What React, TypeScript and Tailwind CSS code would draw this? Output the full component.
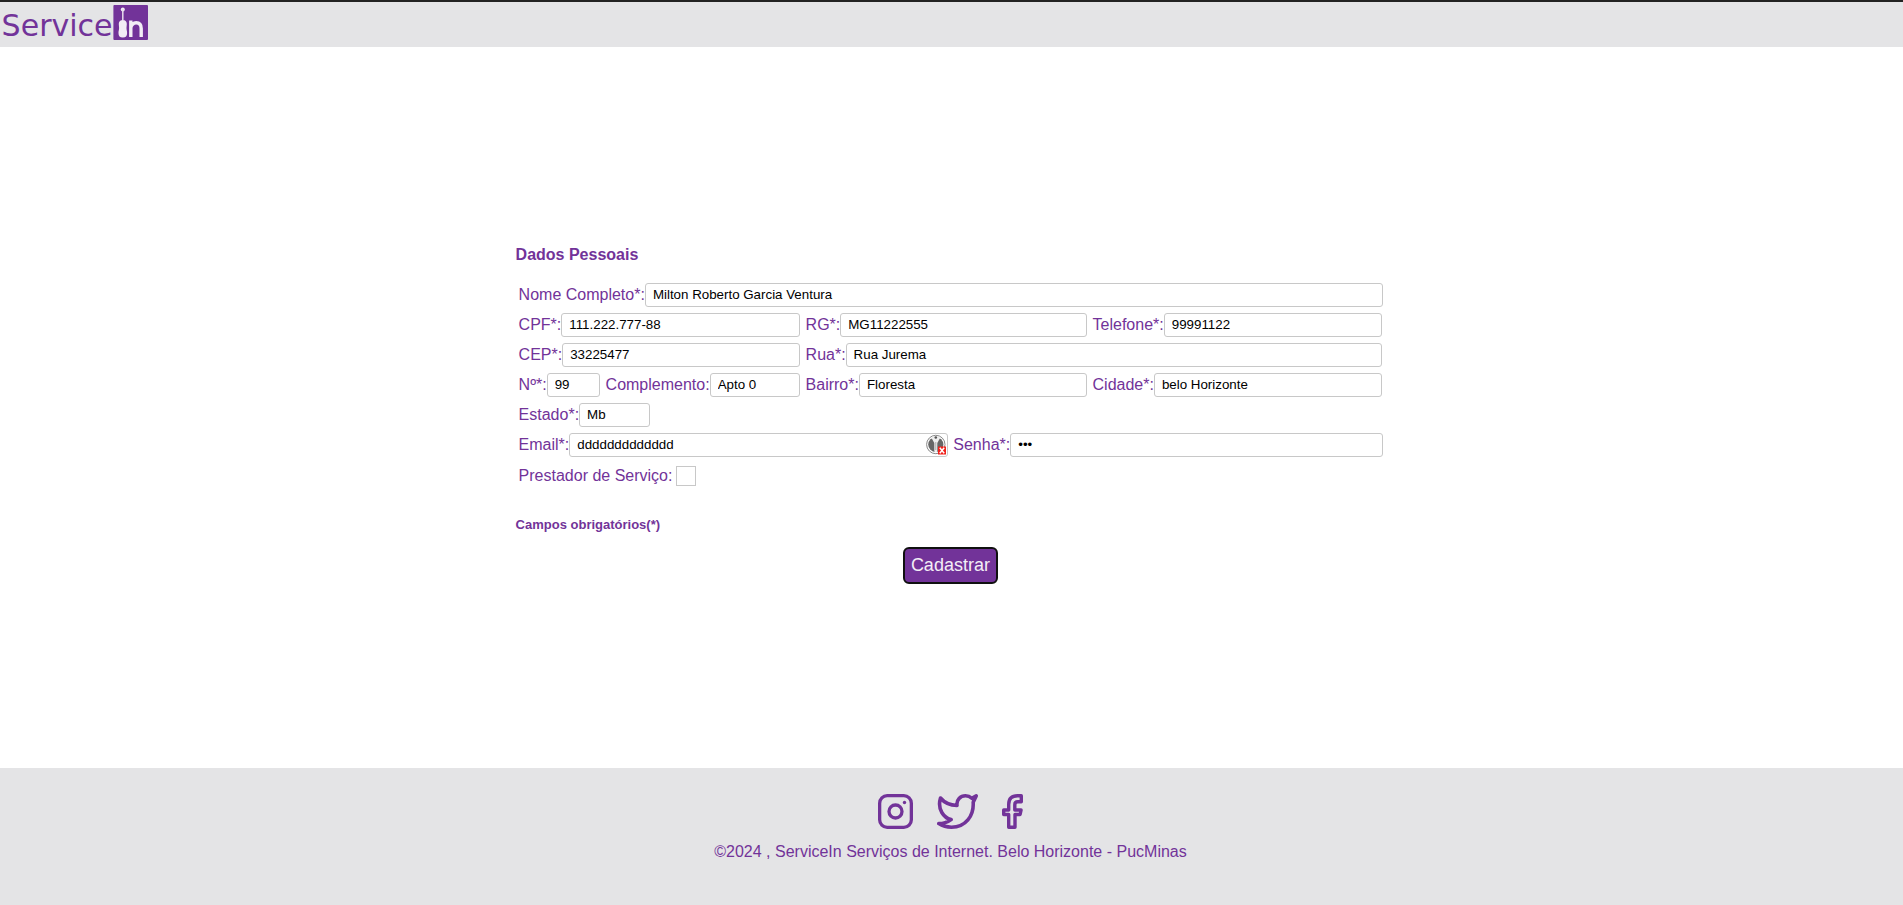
import type { ReactNode } from "react";

type FieldProps = {
  label: string;
  value: string;
  className: string;
  type?: string;
  children?: ReactNode;
};

function Field({ label, value, className, type = "text", children }: FieldProps) {
  return (
    <label className={`relative flex h-6 shrink-0 items-center ${className}`}>
      <span className="whitespace-nowrap leading-6">{label}</span>
      <input
        type={type}
        defaultValue={value}
        className="h-6 min-w-0 flex-1 rounded-[3px] border border-[#c8c8c8] bg-white px-[7px] pb-[2px] text-[13.333px] text-black outline-none"
      />
      {children}
    </label>
  );
}

function Logo() {
  return (
    <svg width="150" height="45" viewBox="0 0 150 45" className="block overflow-visible" role="img">
      <text x="1.6" y="34.4" fontSize="29.5" textLength="111" lengthAdjust="spacingAndGlyphs" fill="#723399" fontFamily="Verdana, DejaVu Sans">
        Service
      </text>
      <rect x="113.4" y="3" width="34.6" height="35" rx="1" fill="#723399" />
      <circle cx="122.8" cy="7.6" r="2" fill="#f2edf5" />
      <path d="M122.8 7v14" stroke="#e6dcec" strokeWidth="1.5" />
      <path d="M121 18.300h3.600c1.500.8 2.200 2 2.200 3.700 0 1.500-.3 2.500-.3 4 0 1.700.6 3 .6 5 0 3.200-1.200 4.500-4.300 4.500s-4.300-1.300-4.300-4.500c0-2 .6-3.300.6-5 0-1.500-.3-2.500-.3-4 0-1.700.7-2.900 2.200-3.700z" fill="#f2edf5" />
      <path d="M130.800 35V18.600M130.800 25.500c.8-3.300 2.800-4.800 5.400-4.800 3.700 0 5 2.200 5 5.800V35" fill="none" stroke="#f2edf5" strokeWidth="3.4" />
    </svg>
  );
}

function ManagerIcon() {
  return (
    <svg width="20" height="21" viewBox="0 0 20 21" className="absolute right-[2px] top-px">
      <circle cx="9.8" cy="10.5" r="9.2" fill="#fff" stroke="#888" strokeWidth="1" />
      <circle cx="9.8" cy="10.5" r="7.6" fill="#666" />
      <path d="M3.800 4.500 9.800 1.800l6 2.700-2 0-2.500 4.500v8.500l-1.500 1-1.500-1V9L5.800 4.500z" fill="#eee" />
      <path d="M9.800 8v8" stroke="#aaa" />
      <circle cx="9.8" cy="3.5" r="1.3" fill="#555" />
      <rect x="12" y="12.5" width="8" height="8" fill="#f0201a" />
      <path d="m13.800 13.800 4.400 5.400m0-5.400-4.400 5.400" stroke="#fff" strokeWidth="1.5" />
    </svg>
  );
}

export default function App() {
  return (
    <div className="flex h-[905px] flex-col bg-white font-['Liberation_Sans',sans-serif] text-base text-[#723399]">
      <header className="h-[47px] border-t-2 border-[#222222] bg-[#e4e4e6]">
        <Logo />
      </header>

      <main className="flex-1 pl-[515.6px] pt-[196px]">
        <form className="w-[869.6px]" onSubmit={(e) => e.preventDefault()}>
          <h1 className="h-10 text-base font-bold leading-6">Dados Pessoais</h1>
          <div className="flex flex-col gap-1.5 pl-[3px]">
            <div className="flex">
              <Field label="Nome Completo*:" value="Milton Roberto Garcia Ventura" className="w-[864.8px]" />
            </div>
            <div className="flex gap-[5.2px]">
              <Field label="CPF*:" value="111.222.777-88" className="w-[281.8px]" />
              <Field label="RG*:" value="MG11222555" className="w-[281.8px]" />
              <Field label="Telefone*:" value="99991122" className="w-[289.8px]" />
            </div>
            <div className="flex gap-[5.2px]">
              <Field label="CEP*:" value="33225477" className="w-[281.8px]" />
              <Field label="Rua*:" value="Rua Jurema" className="w-[576.8px]" />
            </div>
            <div className="flex gap-[5.2px]">
              <Field label="Nº*:" value="99" className="w-[81.8px]" />
              <Field label="Complemento:" value="Apto 0" className="w-[194.8px]" />
              <Field label="Bairro*:" value="Floresta" className="w-[281.8px]" />
              <Field label="Cidade*:" value="belo Horizonte" className="w-[289.8px]" />
            </div>
            <div className="flex">
              <Field label="Estado*:" value="Mb" className="w-[131.8px]" />
            </div>
            <div className="flex gap-[4.9px]">
              <Field label="Email*:" value="ddddddddddddd" className="w-[429.8px]">
                <ManagerIcon />
              </Field>
              <Field label="Senha*:" value="123" type="password" className="w-[429.8px]" />
            </div>
            <label className="mt-[3px] flex h-5 items-center gap-1">
              <span className="whitespace-nowrap leading-5">Prestador de Serviço:</span>
              <input type="checkbox" className="size-5 appearance-none border border-[#c8c8c8] bg-white" />
            </label>
          </div>
          <p className="mt-[29px] text-[13px] font-bold leading-5">Campos obrigatórios(*)</p>
          <div className="mt-3 flex justify-center">
            <button className="h-[37px] w-[95px] rounded-[6px] border-2 border-[#101010] bg-[#723399] pb-[2px] text-lg leading-none text-[#f3eef6]">
              Cadastrar
            </button>
          </div>
        </form>
      </main>

      <footer className="flex h-[137px] flex-col items-center bg-[#e4e4e6] pr-[2px] pt-[26px]">
        <div className="flex h-[35px] items-start gap-6">
          <svg width="35" height="35" viewBox="0 0 35 35" fill="none" stroke="#723399" strokeWidth="3.3">
            <rect x="1.65" y="1.65" width="31.7" height="31.7" rx="7.5" />
            <circle cx="17.5" cy="17.5" r="6.5" />
            <circle cx="26.5" cy="8.5" r="1.7" fill="#723399" stroke="none" />
          </svg>
          <svg width="41" height="35" viewBox="0 0 41 35" fill="none" stroke="#723399" strokeWidth="3.6" strokeLinejoin="round" strokeLinecap="round">
            <path d="M3.500 4C7.500 8.800 13 11.300 20 11.500C19.200 5.500 23.500 1.800 28.500 1.800c2.500 0 4.500.8 6.300 2.500L39.200 1.900l-3 6.300C37 22 28.500 33.200 14.500 33.200c-4.800 0-9-1.200-12.700-3.600 4.800 0 8.300-1.200 12.300-4C7 24 0 15.500 3.500 4z" />
          </svg>
          <svg width="21" height="35" viewBox="0 0 21 35" fill="none" stroke="#723399" strokeWidth="3.4" strokeLinejoin="round">
            <path d="M6.700 33.300V20.500H1.700v-4.500h5V10.500c0-6 3.300-8.800 8.800-8.800h3.800V7.800h-3.500c-2.300 0-3 1-3 2.900V16h6.300l-1 4.500H13v12.800z" />
          </svg>
        </div>
        <p className="mt-[11px] leading-6">©2024 , ServiceIn Serviços de Internet. Belo Horizonte - PucMinas</p>
      </footer>
    </div>
  );
}
